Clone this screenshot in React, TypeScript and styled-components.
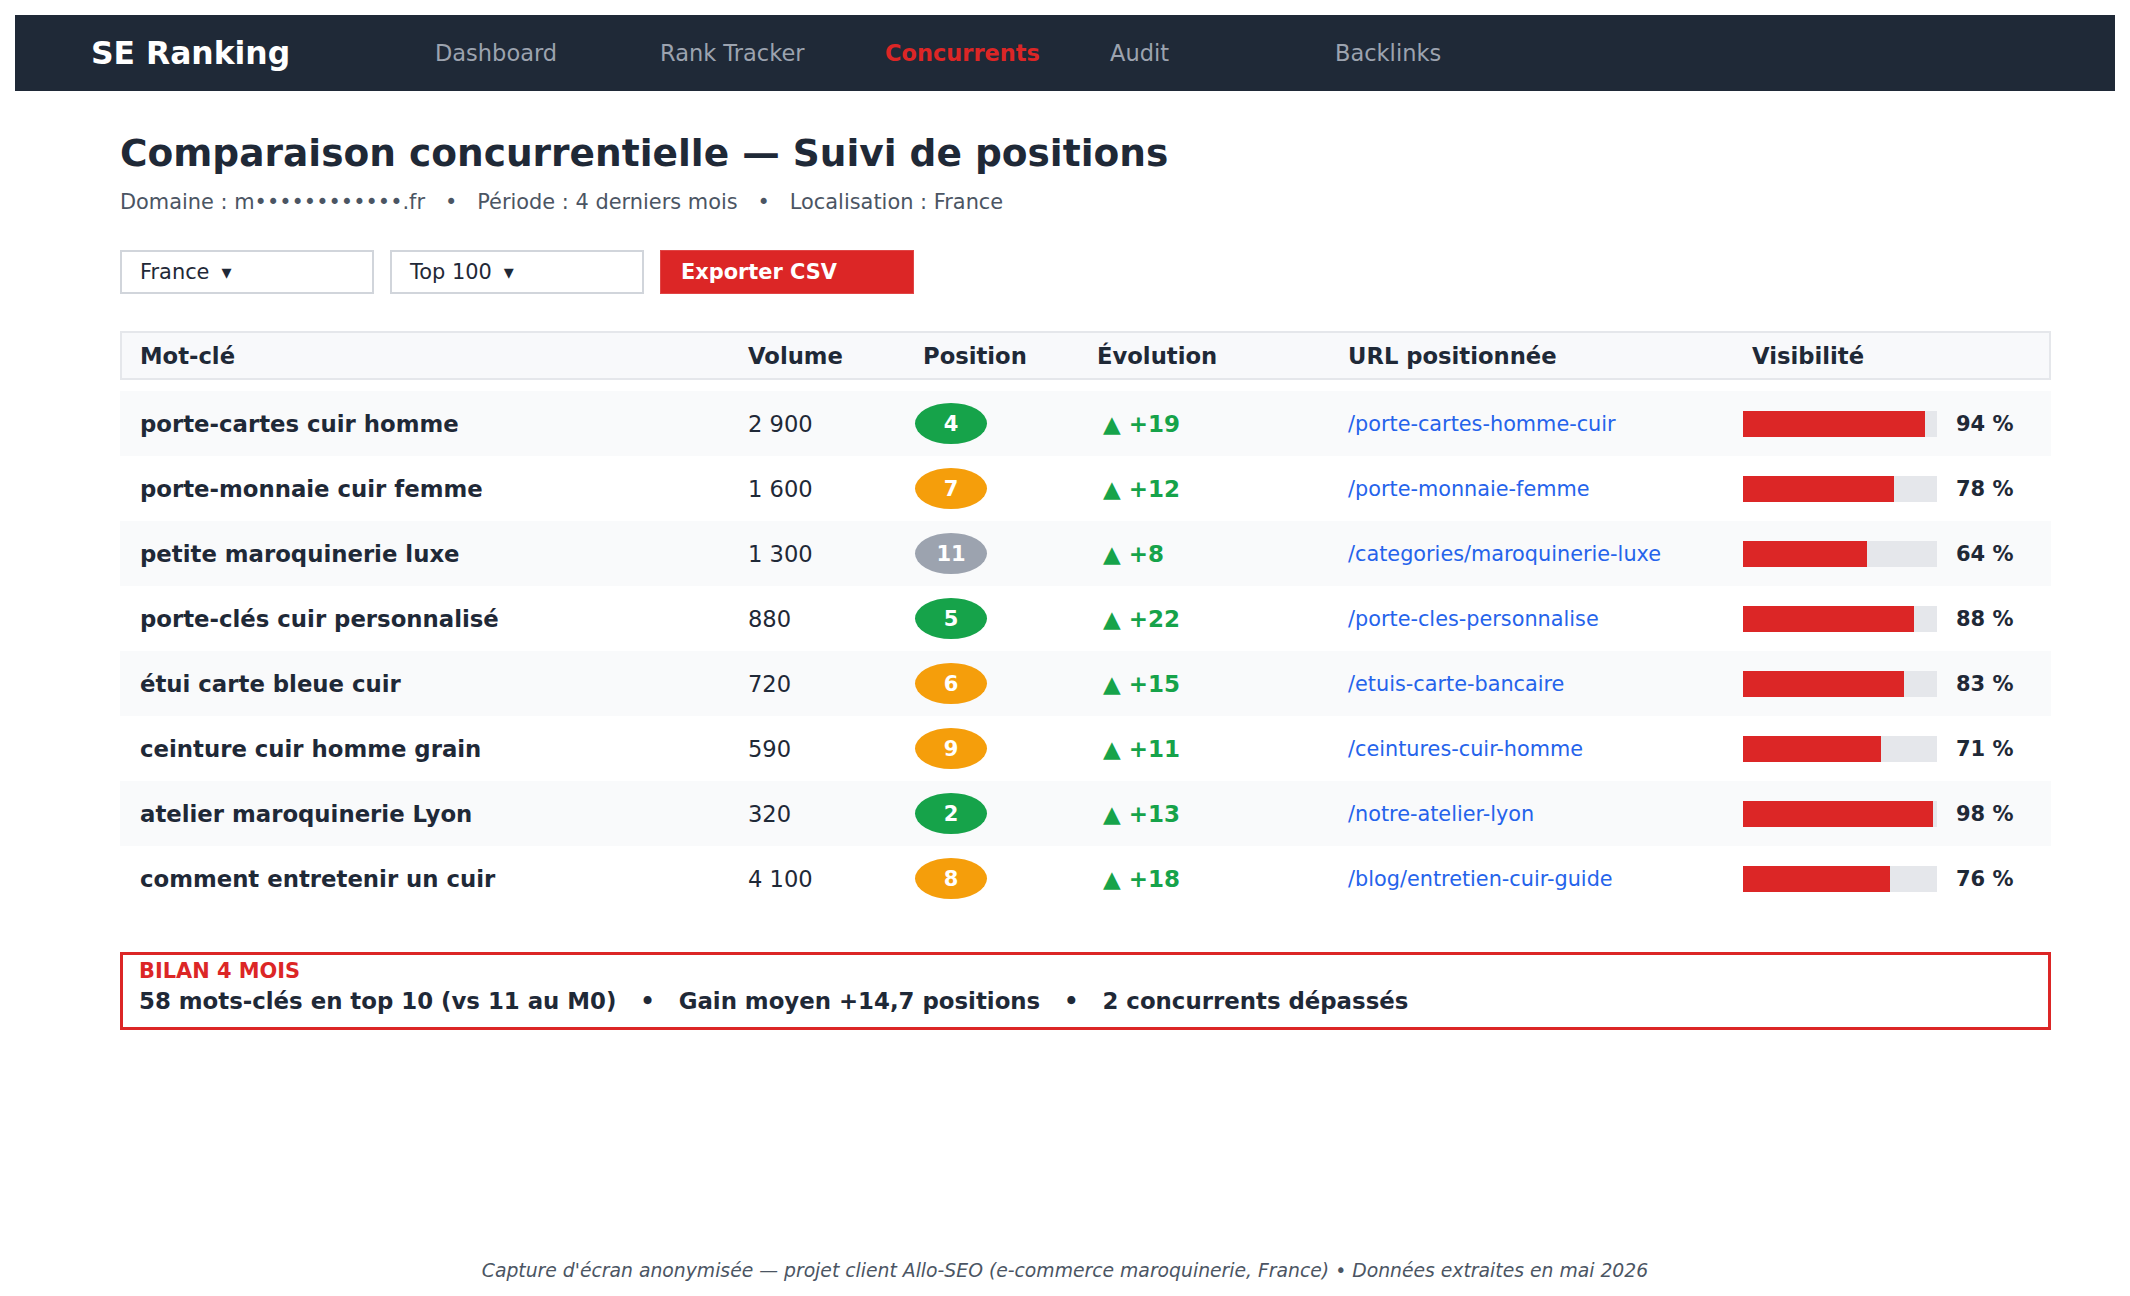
import React from 'react'
import styled, { createGlobalStyle } from 'styled-components'

type Row = {
    keyword: string,
    volume: string,
    position: number,
    evolution: number,
    url: string,
    visibility: number
}

const rows: Row[] = [
    { keyword: 'porte-cartes cuir homme', volume: '2 900', position: 4, evolution: 19, url: '/porte-cartes-homme-cuir', visibility: 94 },
    { keyword: 'porte-monnaie cuir femme', volume: '1 600', position: 7, evolution: 12, url: '/porte-monnaie-femme', visibility: 78 },
    { keyword: 'petite maroquinerie luxe', volume: '1 300', position: 11, evolution: 8, url: '/categories/maroquinerie-luxe', visibility: 64 },
    { keyword: 'porte-clés cuir personnalisé', volume: '880', position: 5, evolution: 22, url: '/porte-cles-personnalise', visibility: 88 },
    { keyword: 'étui carte bleue cuir', volume: '720', position: 6, evolution: 15, url: '/etuis-carte-bancaire', visibility: 83 },
    { keyword: 'ceinture cuir homme grain', volume: '590', position: 9, evolution: 11, url: '/ceintures-cuir-homme', visibility: 71 },
    { keyword: 'atelier maroquinerie Lyon', volume: '320', position: 2, evolution: 13, url: '/notre-atelier-lyon', visibility: 98 },
    { keyword: 'comment entretenir un cuir', volume: '4 100', position: 8, evolution: 18, url: '/blog/entretien-cuir-guide', visibility: 76 },
]

const navItems = ['Dashboard', 'Rank Tracker', 'Concurrents', 'Audit', 'Backlinks']

const GlobalStyle = createGlobalStyle`
    * { box-sizing: border-box; }
    body {
        margin: 0;
        background: #ffffff;
        font-family: "DejaVu Sans", "Liberation Sans", sans-serif;
        color: #1f2937;
    }
`

const Page = styled.div`
    min-height: 100vh;
    padding: 15px;
    display: flex;
    flex-direction: column;
`

const TopBar = styled.nav`
    height: 76px;
    background: #1f2937;
    display: flex;
    align-items: center;
    padding-left: 76px;
`

const Logo = styled.div`
    width: 344px;
    font-size: 31.4px;
    font-weight: 700;
    color: #ffffff;
`

const NavLink = styled.a<{ $active?: boolean }>`
    width: 225px;
    font-size: 22.5px;
    font-weight: ${p => p.$active ? 700 : 400};
    color: ${p => p.$active ? '#dc2626' : '#9ca3af'};
    text-decoration: none;
`

const Main = styled.main`
    padding-left: 105px;
    width: 2036px;
`

const Title = styled.h1`
    margin: 40px 0 0;
    font-size: 37.5px;
    font-weight: 700;
    line-height: normal;
    color: #1f2937;
`

const Subtitle = styled.div`
    margin-top: 15px;
    font-size: 20.9px;
    color: #4b5563;
    white-space: pre;
`

const Filters = styled.div`
    margin-top: 36px;
    display: flex;
    gap: 16px;
`

const Select = styled.div`
    width: 254px;
    height: 44px;
    border: 2px solid #d1d5db;
    background: #ffffff;
    display: flex;
    align-items: center;
    padding-left: 18px;
    font-size: 20.9px;
    color: #1f2937;
`

const Caret = styled.span`
    margin-left: 12px;
    font-size: 20px;
`

const ExportButton = styled.button`
    width: 254px;
    height: 44px;
    border: 1px solid #e04545;
    background: #dc2626;
    color: #ffffff;
    font-family: inherit;
    font-size: 20.9px;
    font-weight: 700;
    text-align: left;
    padding-left: 20px;
`

const Table = styled.div`
    margin-top: 37px;
    width: 1931px;
`

const columns = '608px 175px 174px 251px 404px 1fr'

const HeaderRow = styled.div`
    display: grid;
    grid-template-columns: ${columns};
    align-items: center;
    height: 49px;
    background: #f8f9fb;
    box-shadow: inset 0 0 0 2px #e5e7eb;
    margin-bottom: 11px;
`

const HeadCell = styled.div`
    padding-left: 20px;
    font-size: 22.7px;
    font-weight: 700;
    color: #1f2937;
`

const BodyRow = styled.div<{ $striped: boolean }>`
    display: grid;
    grid-template-columns: ${columns};
    align-items: center;
    height: 65px;
    background: ${p => p.$striped ? '#f9fafb' : '#ffffff'};
`

const Cell = styled.div`
    padding-left: 20px;
    display: flex;
    align-items: center;
    font-size: 22.6px;
    color: #1f2937;
`

const Keyword = styled(Cell)`
    font-size: 22.8px;
    font-weight: 700;
`

const Badge = styled.span<{ $tone: string }>`
    margin-left: -8px;
    width: 72px;
    height: 41px;
    border-radius: 50%;
    background: ${p => p.$tone};
    color: #ffffff;
    font-size: 21px;
    font-weight: 700;
    display: flex;
    align-items: center;
    justify-content: center;
`

const Evolution = styled.span`
    margin-left: 6px;
    font-size: 23px;
    font-weight: 700;
    color: #16a34a;
`

const UrlLink = styled.a`
    font-size: 20.8px;
    color: #2563eb;
    text-decoration: none;
`

const Track = styled.div`
    margin-left: -9px;
    width: 194px;
    height: 26px;
    background: #e5e7eb;
`

const Fill = styled.div`
    height: 100%;
    background: #dc2626;
`

const Percent = styled.span`
    margin-left: 19px;
    font-size: 21px;
    font-weight: 700;
    color: #1f2937;
`

const Summary = styled.div`
    margin-top: 41px;
    width: 1931px;
    height: 78px;
    border: 3px solid #dc2626;
    padding: 4px 16px 0;
`

const SummaryLabel = styled.div`
    font-size: 20.9px;
    font-weight: 700;
    color: #dc2626;
`

const SummaryText = styled.div`
    margin-top: 5px;
    font-size: 22.85px;
    font-weight: 700;
    color: #1f2937;
    white-space: pre;
`

const Footer = styled.footer`
    margin-top: auto;
    text-align: center;
    font-size: 18.8px;
    font-style: italic;
    color: #4b5563;
`

const badgeTone = (pos: number) => pos <= 5 ? '#16a34a' : pos <= 10 ? '#f59e0b' : '#9ca3af'

const App: React.FC = () => {
    return (
        <Page>
            <GlobalStyle />
            <TopBar>
                <Logo>SE Ranking</Logo>
                {navItems.map(item => (
                    <NavLink key={item} $active={item === 'Concurrents'}>{item}</NavLink>
                ))}
            </TopBar>

            <Main>
                <Title>Comparaison concurrentielle — Suivi de positions</Title>
                <Subtitle>{'Domaine : m••••••••••••.fr   •   Période : 4 derniers mois   •   Localisation : France'}</Subtitle>

                <Filters>
                    <Select>France<Caret>▾</Caret></Select>
                    <Select>Top 100<Caret>▾</Caret></Select>
                    <ExportButton>Exporter CSV</ExportButton>
                </Filters>

                <Table>
                    <HeaderRow>
                        <HeadCell>Mot-clé</HeadCell>
                        <HeadCell>Volume</HeadCell>
                        <HeadCell>Position</HeadCell>
                        <HeadCell>Évolution</HeadCell>
                        <HeadCell>URL positionnée</HeadCell>
                        <HeadCell>Visibilité</HeadCell>
                    </HeaderRow>
                    {rows.map((r, i) => (
                        <BodyRow key={r.keyword} $striped={i % 2 === 0}>
                            <Keyword>{r.keyword}</Keyword>
                            <Cell>{r.volume}</Cell>
                            <Cell><Badge $tone={badgeTone(r.position)}>{r.position}</Badge></Cell>
                            <Cell><Evolution>▲ +{r.evolution}</Evolution></Cell>
                            <Cell><UrlLink>{r.url}</UrlLink></Cell>
                            <Cell>
                                <Track><Fill style={{ width: `${r.visibility}%` }} /></Track>
                                <Percent>{r.visibility} %</Percent>
                            </Cell>
                        </BodyRow>
                    ))}
                </Table>

                <Summary>
                    <SummaryLabel>BILAN 4 MOIS</SummaryLabel>
                    <SummaryText>{'58 mots-clés en top 10 (vs 11 au M0)   •   Gain moyen +14,7 positions   •   2 concurrents dépassés'}</SummaryText>
                </Summary>
            </Main>

            <Footer>Capture d'écran anonymisée — projet client Allo-SEO (e-commerce maroquinerie, France) • Données extraites en mai 2026</Footer>
        </Page>
    )
}

export default App
